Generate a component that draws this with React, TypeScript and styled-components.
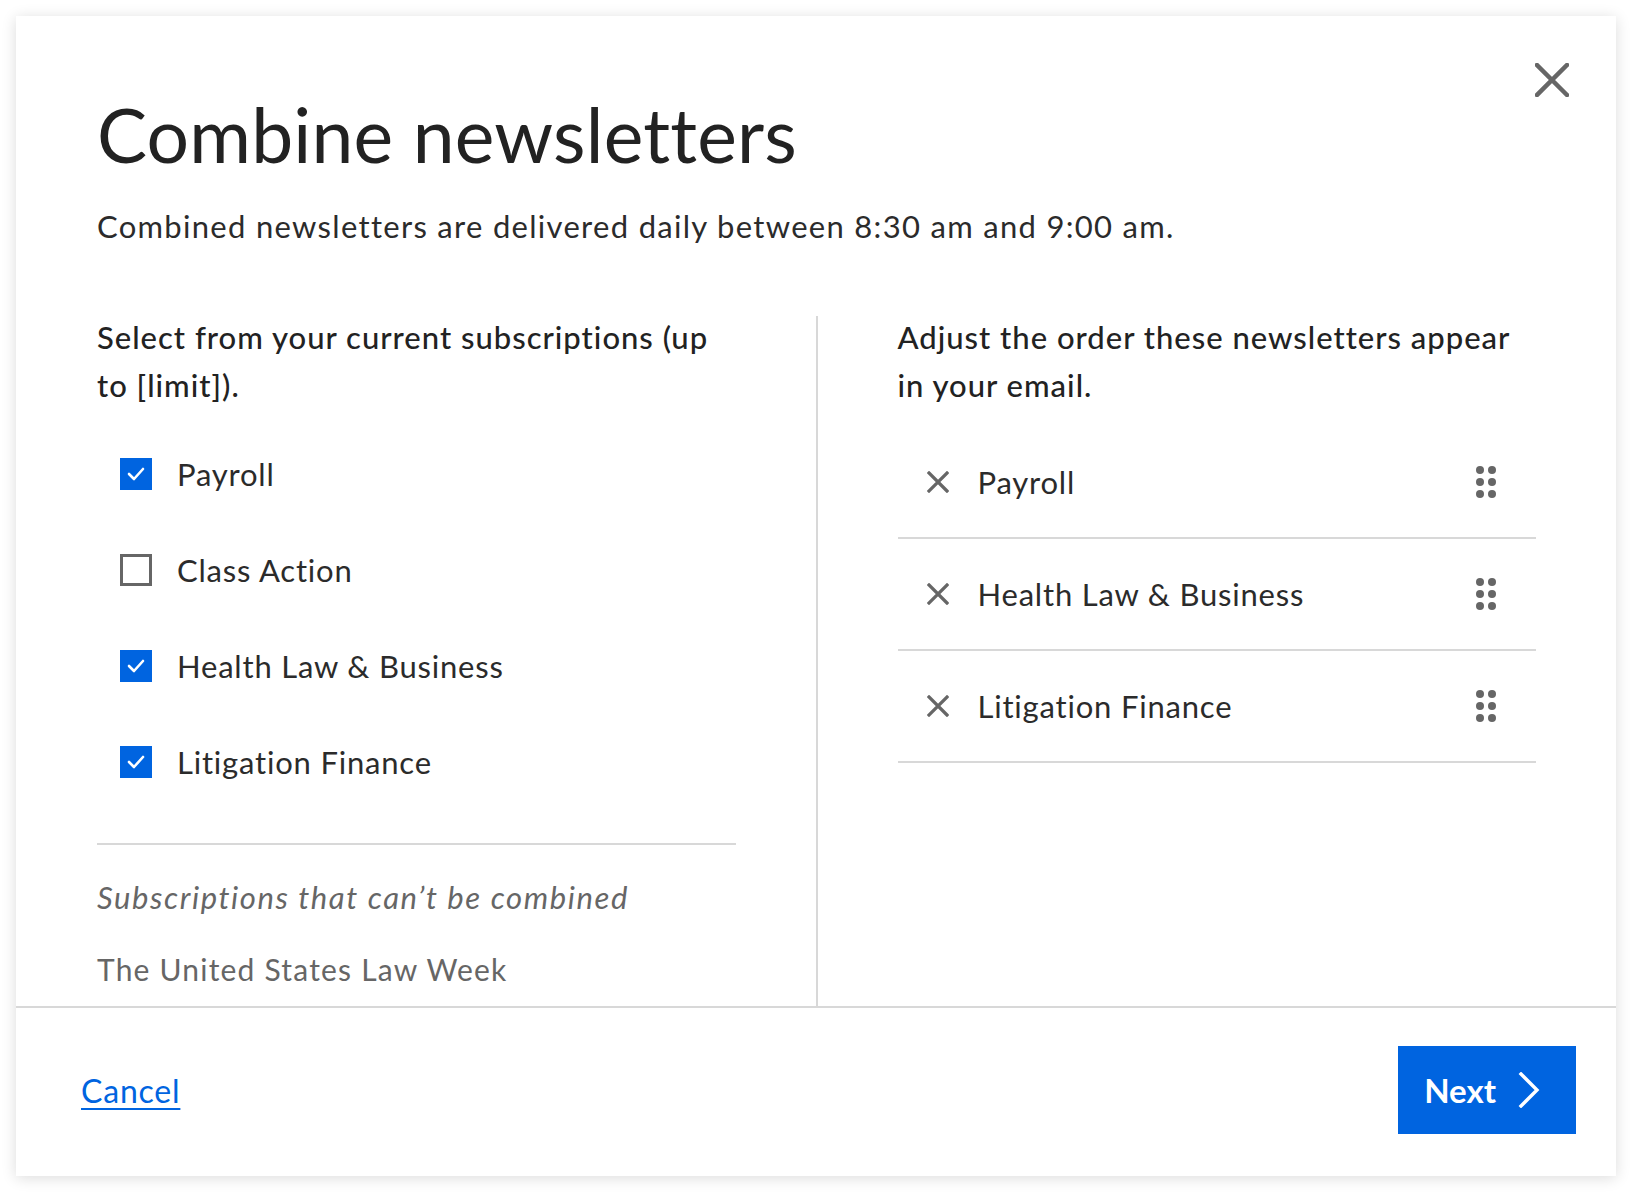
import styled, { createGlobalStyle } from "styled-components";

const GlobalStyle = createGlobalStyle`
  html, body {
    margin: 0;
    background: #ffffff;
  }
  body {
    font-family: Lato, "Open Sans", sans-serif;
    color: #2b2b2b;
  }
`;

type Subscription = { name: string; checked: boolean };

const subscriptions: Subscription[] = [
  { name: "Payroll", checked: true },
  { name: "Class Action", checked: false },
  { name: "Health Law & Business", checked: true },
  { name: "Litigation Finance", checked: true },
];

const CloseIcon = () => (
  <svg width="34" height="34" viewBox="0 0 34 34">
    <path
      d="M2 2 L32 32 M32 2 L2 32"
      stroke="#666"
      strokeWidth="4.5"
      strokeLinecap="square"
    />
  </svg>
);

const RemoveIcon = () => (
  <svg width="22" height="22" viewBox="0 0 22 22">
    <path
      d="M2 2 L20 20 M20 2 L2 20"
      stroke="#666"
      strokeWidth="3.2"
      strokeLinecap="square"
    />
  </svg>
);

const CheckIcon = () => (
  <svg width="18" height="14" viewBox="0 0 18 14">
    <path
      d="M2 7 L7 12 L16 2"
      fill="none"
      stroke="#fff"
      strokeWidth="2.6"
      strokeLinecap="round"
      strokeLinejoin="round"
    />
  </svg>
);

const DragHandle = () => (
  <svg width="20" height="32" viewBox="0 0 20 32">
    {[4, 16, 28].map((cy) =>
      [4, 16].map((cx) => (
        <circle key={`${cx}-${cy}`} cx={cx} cy={cy} r="4" fill="#666" />
      ))
    )}
  </svg>
);

const ChevronRight = () => (
  <svg width="22" height="36" viewBox="0 0 22 36">
    <path
      d="M3 2 L19 18 L3 34"
      fill="none"
      stroke="#fff"
      strokeWidth="3.4"
      strokeLinecap="square"
    />
  </svg>
);

export default function App() {
  const selected = subscriptions.filter((s) => s.checked);

  return (
    <>
      <GlobalStyle />
      <Page>
        <Modal>
          <CloseButton aria-label="Close">
            <CloseIcon />
          </CloseButton>
          <Header>
            <Title>Combine newsletters</Title>
            <Subtitle>
              Combined newsletters are delivered daily between 8:30 am and 9:00
              am.
            </Subtitle>
          </Header>
          <Columns>
            <Column>
              <Heading>
                Select from your current subscriptions (up to [limit]).
              </Heading>
              <CheckList>
                {subscriptions.map((s) => (
                  <CheckRow key={s.name}>
                    <Box $checked={s.checked}>{s.checked && <CheckIcon />}</Box>
                    <RowLabel>{s.name}</RowLabel>
                  </CheckRow>
                ))}
              </CheckList>
              <Rule />
              <Muted $italic>Subscriptions that can’t be combined</Muted>
              <Muted>The United States Law Week</Muted>
            </Column>
            <Divider />
            <Column>
              <Heading>Adjust the order these newsletters appear in your email.</Heading>
              <OrderList>
                {selected.map((s) => (
                  <OrderRow key={s.name}>
                    <RemoveButton aria-label={`Remove ${s.name}`}>
                      <RemoveIcon />
                    </RemoveButton>
                    <RowLabel>{s.name}</RowLabel>
                    <Handle>
                      <DragHandle />
                    </Handle>
                  </OrderRow>
                ))}
              </OrderList>
            </Column>
          </Columns>
          <Footer>
            <CancelLink href="#">Cancel</CancelLink>
            <NextButton>
              Next
              <ChevronRight />
            </NextButton>
          </Footer>
        </Modal>
      </Page>
    </>
  );
}

const Page = styled.div`
  padding: 16px;
`;

const Modal = styled.div`
  position: relative;
  width: 1600px;
  height: 1160px;
  background: #fff;
  box-shadow: 0 2px 14px rgba(0, 0, 0, 0.14);
  display: flex;
  flex-direction: column;
`;

const CloseButton = styled.button`
  position: absolute;
  top: 47px;
  right: 47px;
  padding: 0;
  border: none;
  background: none;
  display: flex;
  cursor: pointer;
`;

const Header = styled.div`
  padding: 72px 80px 0 81px;
`;

const Title = styled.h1`
  margin: 0;
  font-size: 75px;
  line-height: 92px;
  font-weight: 400;
  color: #222;
  letter-spacing: 0.2px;
`;

const Subtitle = styled.p`
  margin: 26px 0 0;
  font-size: 31px;
  line-height: 40px;
  letter-spacing: 1.3px;
  color: #2b2b2b;
`;

const Columns = styled.div`
  flex: 1;
  display: flex;
  margin-top: 70px;
`;

const Column = styled.div`
  width: 640px;
  padding: 0 80px 0 81px;
  &:last-child {
    padding: 0 80px 0 80px;
  }
`;

const Divider = styled.div`
  width: 2px;
  background: #d8d8d8;
`;

const Heading = styled.h2`
  margin: -3px 0 0;
  font-size: 31px;
  line-height: 48px;
  font-weight: 500;
  letter-spacing: 1px;
  color: #222;
`;

const CheckList = styled.div`
  margin-top: 17px;
`;

const CheckRow = styled.label`
  display: flex;
  align-items: center;
  height: 96px;
  padding-left: 23px;
`;

const Box = styled.span<{ $checked: boolean }>`
  box-sizing: border-box;
  width: 32px;
  height: 32px;
  flex: none;
  display: flex;
  align-items: center;
  justify-content: center;
  background: ${(p) => (p.$checked ? "#0064e0" : "#fff")};
  border: ${(p) => (p.$checked ? "none" : "3px solid #666")};
  margin-right: 25px;
`;

const RowLabel = styled.span`
  font-size: 31px;
  letter-spacing: 0.8px;
  color: #2b2b2b;
  flex: 1;
`;

const Rule = styled.hr`
  margin: 33px 0 0;
  border: none;
  border-top: 2px solid #d8d8d8;
`;

const Muted = styled.p<{ $italic?: boolean }>`
  margin: 32px 0 0;
  font-size: ${(p) => (p.$italic ? "31px" : "30px")};
  line-height: 40px;
  letter-spacing: ${(p) => (p.$italic ? "1.6px" : "1.2px")};
  color: #666;
  font-style: ${(p) => (p.$italic ? "italic" : "normal")};
`;

const OrderList = styled.div`
  margin-top: 18px;
`;

const OrderRow = styled.div`
  display: flex;
  align-items: center;
  height: 110px;
  border-bottom: 2px solid #d8d8d8;
  padding: 0 40px 0 29px;
`;

const RemoveButton = styled.button`
  padding: 0;
  border: none;
  background: none;
  display: flex;
  margin-right: 29px;
  cursor: pointer;
`;

const Handle = styled.span`
  display: flex;
  cursor: grab;
`;

const Footer = styled.div`
  box-sizing: border-box;
  height: 170px;
  border-top: 2px solid #d8d8d8;
  display: flex;
  align-items: center;
  justify-content: space-between;
  padding: 0 40px 4px 65px;
`;

const CancelLink = styled.a`
  font-size: 32px;
  letter-spacing: 0.8px;
  color: #0064e0;
  text-decoration: underline;
  text-underline-offset: 5px;
  text-decoration-thickness: 2px;
`;

const NextButton = styled.button`
  display: flex;
  align-items: center;
  gap: 22px;
  height: 88px;
  padding: 0 36px 0 26px;
  border: none;
  background: #0064e0;
  color: #fff;
  font-family: Lato, "Open Sans", sans-serif;
  font-size: 33px;
  font-weight: 700;
  cursor: pointer;
`;
